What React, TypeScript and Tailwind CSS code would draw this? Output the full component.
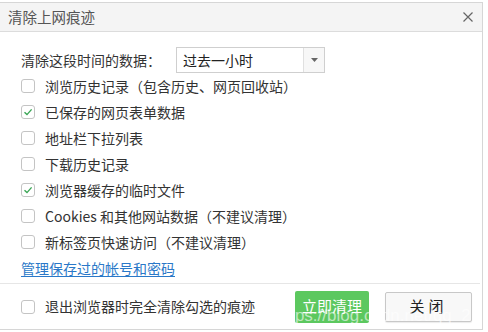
import { useState } from 'react'

type Item = { label: string; checked: boolean }

const items: Item[] = [
  { label: '浏览历史记录（包含历史、网页回收站）', checked: false },
  { label: '已保存的网页表单数据', checked: true },
  { label: '地址栏下拉列表', checked: false },
  { label: '下载历史记录', checked: false },
  { label: '浏览器缓存的临时文件', checked: true },
  { label: 'Cookies 和其他网站数据（不建议清理）', checked: false },
  { label: '新标签页快速访问（不建议清理）', checked: false },
]

const Box = ({ checked, onClick }: { checked: boolean; onClick: () => void }) => (
  <span
    onClick={onClick}
    className="w-[14px] h-[14px] rounded-[3px] border border-[#c4c4c4] bg-white flex items-center justify-center shrink-0 cursor-pointer"
  >
    {checked && (
      <svg width="10" height="10" viewBox="0 0 10 10">
        <path d="M1.5 5.2 L4 7.6 L8.6 2.4" fill="none" stroke="#3aa655" strokeWidth="1.4" />
      </svg>
    )}
  </span>
)

export default function App() {
  const [checks, setChecks] = useState(items.map((i) => i.checked))
  const [onExit, setOnExit] = useState(false)

  return (
    <div
      className="w-[488px] h-[332px] bg-white pt-[2px] text-[14px] text-[#333] relative overflow-hidden"
      style={{ fontFamily: '"Noto Sans CJK SC", "Microsoft YaHei", sans-serif' }}
    >
      <div className="w-[483px] h-[328px] border border-l-0 border-[#d6d6d6] flex flex-col">
        <div className="h-[29px] bg-[#f4f4f4] border-b border-[#dcdcdc] flex items-center justify-between pl-[8px] pr-[6px]">
          <span className="text-[#555] text-[14.5px]">清除上网痕迹</span>
          <svg width="12" height="12" viewBox="0 0 12 12" className="mr-[2px]">
            <path d="M1.5 1.5 L10.5 10.5 M10.5 1.5 L1.5 10.5" stroke="#666" strokeWidth="1.2" />
          </svg>
        </div>

        <div className="flex flex-col pl-[21px] pt-[15px]">
          <div className="flex items-center h-[26px]">
            <span>清除这段时间的数据：</span>
            <div className="ml-[15px] w-[149px] h-[26px] border border-[#cfcfcf] flex items-stretch">
              <span className="flex-1 pl-[6px] flex items-center text-[#222]">过去一小时</span>
              <span className="w-[21px] border-l border-[#e0e0e0] bg-[#f7f7f7] flex items-center justify-center">
                <svg width="7" height="4" viewBox="0 0 7 4">
                  <path d="M0 0 L7 0 L3.5 4 Z" fill="#666" />
                </svg>
              </span>
            </div>
          </div>

          {items.map((it, i) => (
            <div key={it.label} className="flex items-center h-[26px] gap-[10px]">
              <Box
                checked={checks[i]}
                onClick={() => setChecks(checks.map((c, j) => (j === i ? !c : c)))}
              />
              <span>{it.label}</span>
            </div>
          ))}

          <a className="h-[26px] flex items-center text-[#2a78c8] underline underline-offset-2 w-fit cursor-pointer">
            管理保存过的帐号和密码
          </a>
        </div>

        <div className="mt-[2px] mr-[2px] border-t border-[#e6e6e6] flex-1 flex items-center pl-[21px] pr-[8px]">
          <Box checked={onExit} onClick={() => setOnExit(!onExit)} />
          <span className="ml-[10px]">退出浏览器时完全清除勾选的痕迹</span>
          <button className="ml-auto w-[74px] h-[32px] bg-[#5cc85f] rounded-[2px] text-white text-[15px]">
            立即清理
          </button>
          <button className="ml-[16px] w-[87px] h-[30px] border border-[#c8c8c8] rounded-[2px] bg-[#f8f8f8] text-[#222] text-[15px] tracking-[4px] shadow-[0_1px_1px_rgba(0,0,0,0.08)]">
            关闭
          </button>
        </div>
      </div>

      <span
        className="absolute left-[276px] top-[303px] text-[17px] text-white/60 whitespace-nowrap pointer-events-none"
        style={{ fontFamily: '"Liberation Sans", sans-serif' }}
      >
        https://blog.csdn.net/qq_2
      </span>
    </div>
  )
}
